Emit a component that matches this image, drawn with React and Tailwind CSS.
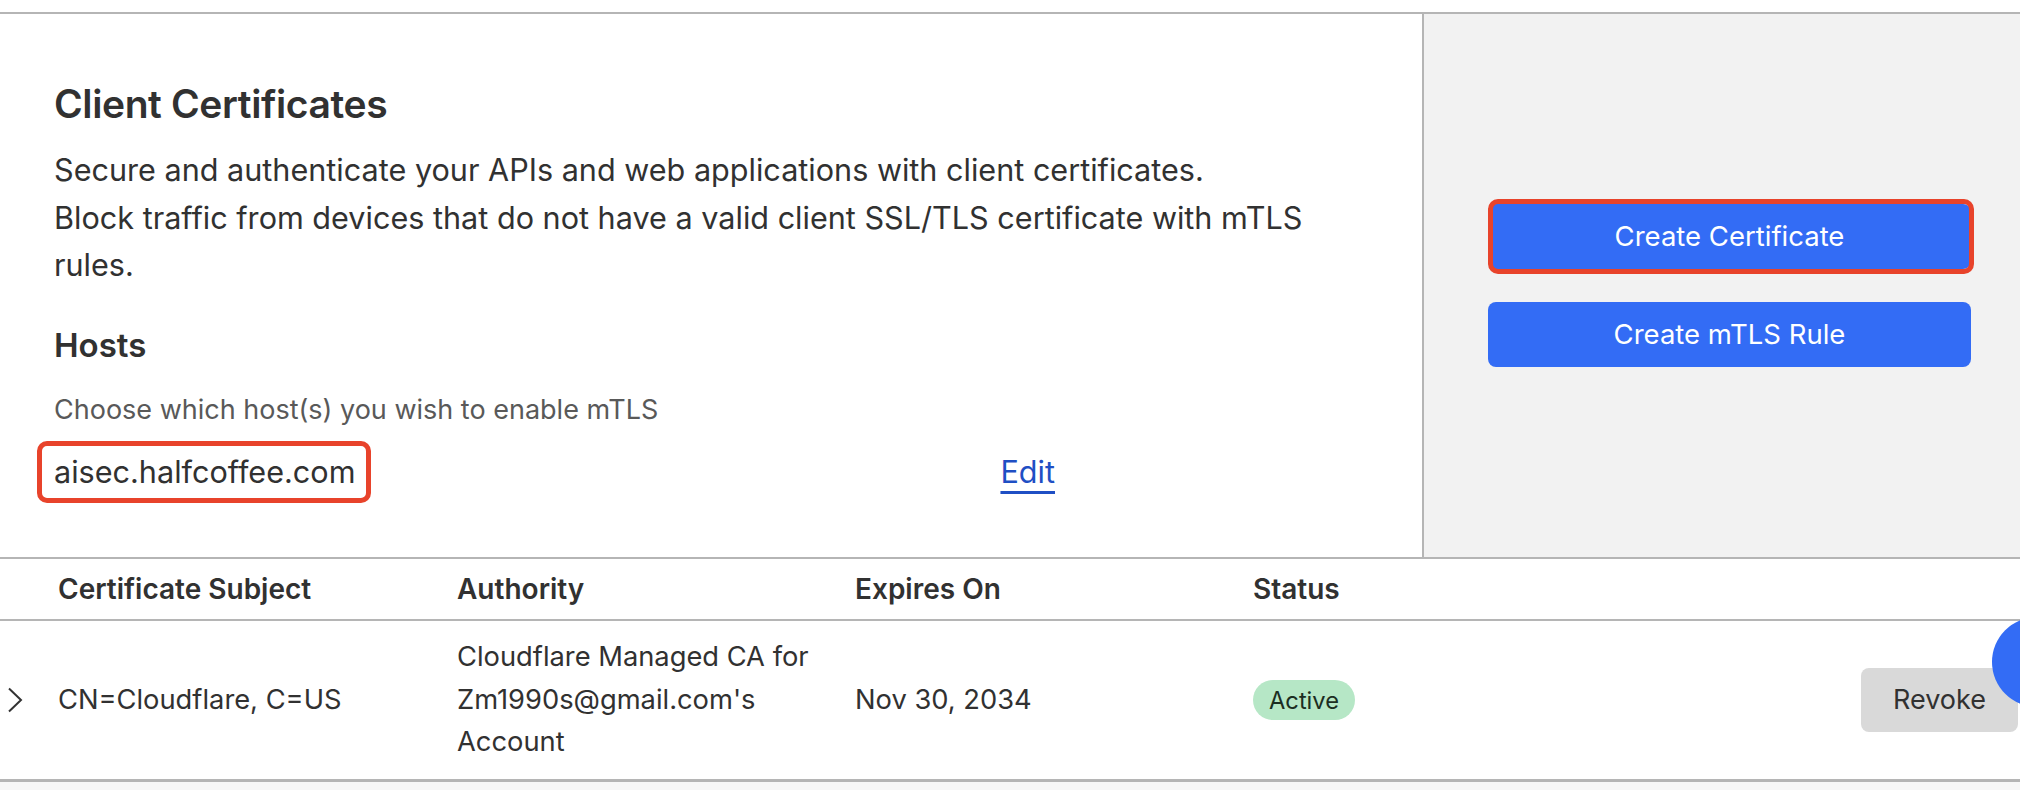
import React from 'react';

// ── Small pieces ──────────────────────────────────────────────────────────────
const Chevron = () => (
  <svg width="16" height="26" viewBox="0 0 16 26" fill="none" aria-hidden="true">
    <polyline points="2,1.5 14,13 2,24.5" stroke="#333" strokeWidth="2" strokeLinejoin="miter" />
  </svg>
);

const BlueButton = ({ children, highlighted }) => (
  <div className="relative w-[483px]">
    <button
      type="button"
      className="flex h-[65px] w-[483px] items-center justify-center rounded-[8px] bg-[#336cf5] text-[27.5px] text-white"
    >
      {children}
    </button>
    {/* red annotation box drawn over the screenshot */}
    {highlighted && (
      <div className="pointer-events-none absolute -top-[5px] -bottom-[5px] left-0 -right-[3px] rounded-[10px] border-[5px] border-[#e8432b]" />
    )}
  </div>
);

// ── App ───────────────────────────────────────────────────────────────────────
export default function App() {
  return (
    <div className="relative flex h-[790px] w-[2020px] flex-col overflow-hidden bg-white font-['Inter','Noto_Sans',sans-serif] text-[#313131]">
      <div className="h-[12px] shrink-0" />

      {/* Top card */}
      <section className="flex h-[547px] shrink-0 border-y-2 border-[#b5b5b5]">
        <div className="flex-1 pl-[54px] pt-[70px]">
          <h2 className="text-[39px] font-semibold leading-[40px] tracking-[-0.01em] text-[#313131]">
            Client Certificates
          </h2>
          <div className="mt-[22px] text-[30.6px] leading-[47.6px]">
            <p>Secure and authenticate your APIs and web applications with client certificates.</p>
            <p className="w-[1290px]">
              Block traffic from devices that do not have a valid client SSL/TLS certificate with mTLS rules.
            </p>
          </div>
          <h3 className="mt-[36px] text-[33px] font-semibold leading-[40px]">Hosts</h3>
          <p className="mt-[28px] text-[27px] leading-[34px] text-[#595959]">
            Choose which host(s) you wish to enable mTLS
          </p>
          <div className="mt-[17px] flex w-[1000px] items-center justify-between">
            <div className="relative">
              <span className="text-[30.6px] leading-[56px]">aisec.halfcoffee.com</span>
              <div className="pointer-events-none absolute -left-[17px] -right-[16px] top-[-3px] bottom-[-3px] rounded-[10px] border-[5px] border-[#e8432b]" />
            </div>
            <a href="#" className="-mr-[1px] text-[30.6px] text-[#1f4fc4] underline decoration-[3px] underline-offset-[8px]">
              Edit
            </a>
          </div>
        </div>

        <div className="flex w-[598px] flex-col justify-center gap-[33px] border-l-2 border-[#b5b5b5] bg-[#f2f2f2] pl-[64px]">
          <BlueButton highlighted>Create Certificate</BlueButton>
          <BlueButton>Create mTLS Rule</BlueButton>
        </div>
      </section>

      {/* Table header */}
      <div className="flex h-[62px] shrink-0 items-center border-b-2 border-[#b5b5b5] text-[28px] font-semibold">
        <div className="w-[58px]" />
        <div className="w-[399px]">Certificate Subject</div>
        <div className="w-[398px]">Authority</div>
        <div className="w-[398px]">Expires On</div>
        <div className="w-[398px]">Status</div>
      </div>

      {/* Row */}
      <div className="relative flex h-[161px] shrink-0 items-center border-b-[3px] border-[#b5b5b5] text-[27.3px]">
        <div className="flex w-[58px] items-center pl-[7px]">
          <Chevron />
        </div>
        <div className="w-[399px]">CN=Cloudflare, C=US</div>
        <div className="w-[398px] leading-[42.5px]">
          Cloudflare Managed CA for
          <br />
          Zm1990s@gmail.com's
          <br />
          Account
        </div>
        <div className="w-[398px]">Nov 30, 2034</div>
        <div className="w-[398px]">
          <span className="inline-flex h-[40px] items-center rounded-full bg-[#b6e7c6] px-[16px] text-[23.7px] text-[#1c2e22]">
            Active
          </span>
        </div>
        <div className="flex flex-1 justify-end pr-[2px]">
          <button type="button" className="h-[64px] rounded-[8px] bg-[#d9d9d9] px-[32px] text-[27px] text-[#313131]">
            Revoke
          </button>
        </div>
        {/* floating help bubble, mostly off the right edge */}
        <div className="absolute right-[-62px] top-[-4px] h-[90px] w-[90px] rounded-full bg-[#336cf5]" />
      </div>

      <div className="flex-1 bg-[#f7f7f7]" />
    </div>
  );
}
